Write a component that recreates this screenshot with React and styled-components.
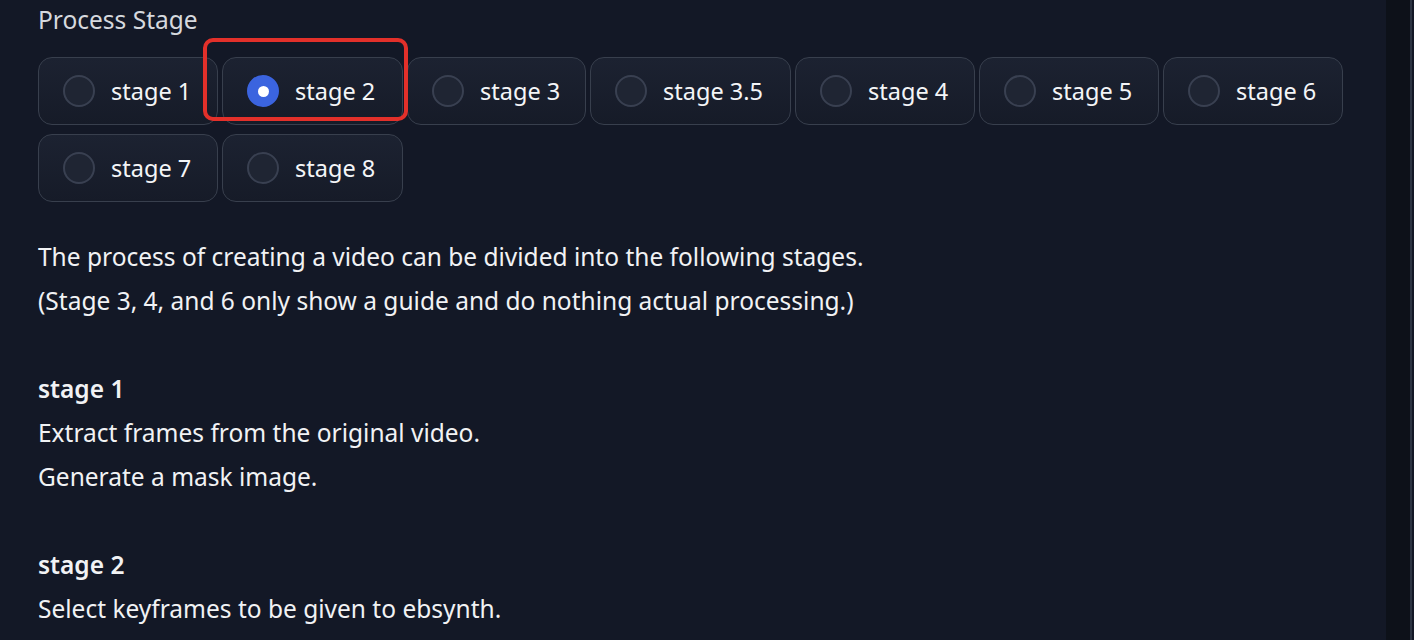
import styled, { createGlobalStyle } from "styled-components";

const GlobalStyle = createGlobalStyle`
  html, body {
    margin: 0;
    padding: 0;
    background-color: #131826;
  }
  body {
    font-family: "Noto Sans", Lato, sans-serif;
  }
`;

const Page = styled.div`
  display: flex;
  width: 1414px;
  height: 640px;
  overflow: hidden;
`;

const Main = styled.div`
  flex: 1;
  background-color: #131826;
  padding: 4px 0 0 38px;
`;

const SideStrip = styled.div`
  width: 24px;
  background-color: #0d1119;
  border-right: 2px solid #2c3342;
  margin-right: 2px;
`;

const Label = styled.div`
  font-size: 24.5px;
  line-height: 32px;
  color: #d6d9de;
  margin-bottom: 21px;
`;

const Group = styled.div`
  position: relative;
  display: flex;
  flex-wrap: wrap;
  gap: 9px 4px;
  width: 1310px;
`;

const Option = styled.label`
  display: flex;
  align-items: center;
  gap: 16px;
  box-sizing: border-box;
  height: 68px;
  width: ${(props) => props.$width}px;
  padding: 0 24px;
  border: 1.5px solid #383f4d;
  border-radius: 14px;
  background: linear-gradient(#1c2231, #161b28);
  color: #f4f5f7;
  font-size: 23.5px;
  cursor: pointer;
`;

const Radio = styled.span`
  box-sizing: border-box;
  width: 32px;
  height: 32px;
  border-radius: 50%;
  flex-shrink: 0;
  display: flex;
  align-items: center;
  justify-content: center;
  background-color: ${(props) => (props.$checked ? "#3b64df" : "#1f2533")};
  border: 2px solid ${(props) => (props.$checked ? "#3b64df" : "#394051")};

  &::after {
    content: "";
    display: ${(props) => (props.$checked ? "block" : "none")};
    width: 11px;
    height: 11px;
    border-radius: 50%;
    background-color: #fff;
  }
`;

const Highlight = styled.div`
  position: absolute;
  left: 165px;
  top: -19px;
  width: 205px;
  height: 83px;
  box-sizing: border-box;
  border: 4px solid #e3302a;
  border-radius: 10px;
  pointer-events: none;
`;

const Body = styled.div`
  margin-top: 33px;
  font-size: 24.5px;
  line-height: 44px;
  color: #f1f2f4;
`;

const Para = styled.p`
  margin: 0 0 44px;
`;

const Strong = styled.strong`
  font-weight: 600;
`;

const stages = [
  { name: "stage 1", width: 180 },
  { name: "stage 2", width: 181 },
  { name: "stage 3", width: 179 },
  { name: "stage 3.5", width: 201 },
  { name: "stage 4", width: 180 },
  { name: "stage 5", width: 180 },
  { name: "stage 6", width: 180 },
  { name: "stage 7", width: 180 },
  { name: "stage 8", width: 181 },
];

export default function App() {
  const selected = "stage 2";
  return (
    <Page>
      <GlobalStyle />
      <Main>
        <Label>Process Stage</Label>
        <Group>
          {stages.map((s) => (
            <Option key={s.name} $width={s.width}>
              <Radio $checked={s.name === selected} />
              {s.name}
            </Option>
          ))}
          <Highlight />
        </Group>
        <Body>
          <Para>
            The process of creating a video can be divided into the following stages.
            <br />
            (Stage 3, 4, and 6 only show a guide and do nothing actual processing.)
          </Para>
          <Para>
            <Strong>stage 1</Strong>
            <br />
            Extract frames from the original video.
            <br />
            Generate a mask image.
          </Para>
          <Para>
            <Strong>stage 2</Strong>
            <br />
            Select keyframes to be given to ebsynth.
          </Para>
        </Body>
      </Main>
      <SideStrip />
    </Page>
  );
}
